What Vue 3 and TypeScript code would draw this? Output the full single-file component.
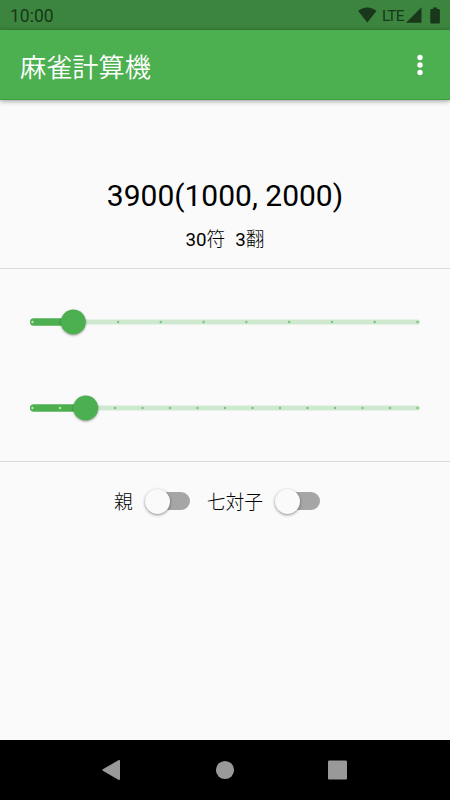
<script setup lang="ts">
import { ref } from 'vue'

interface SliderModel {
  label: string
  value: number
  divisions: number
}

interface SwitchModel {
  label: string
  on: boolean
}

const title = '麻雀計算機'
const score = '3900(1000, 2000)'

const sliders = ref<SliderModel[]>([
  { label: '符', value: 1, divisions: 9 },
  { label: '翻', value: 2, divisions: 14 },
])

const switches = ref<SwitchModel[]>([
  { label: '親', on: false },
  { label: '七対子', on: false },
])

const thumbX = (s: SliderModel): number => 30 + (390 * s.value) / s.divisions
const tickX = (s: SliderModel, i: number): number => 32.5 + (385 * i) / s.divisions
const ticks = (s: SliderModel): number[] =>
  Array.from({ length: s.divisions + 1 }, (_, i) => i).filter((i) => i !== s.value)
</script>

<template>
  <div class="screen">
    <div class="status">
      <span class="clock">10:00</span>
      <svg class="wifi" width="20" height="16" viewBox="0 0 20 16">
        <path d="M9.300 15.500 .2 4.100C2.700 1.900 5.800.6 9.300 .6s6.600 1.300 9.100 3.500z" />
      </svg>
      <span class="lte">LTE</span>
      <svg class="signal" width="16" height="16" viewBox="0 0 16 16">
        <path d="M0 15.700 15.500.2V15.700z" />
      </svg>
      <svg class="battery" width="10" height="17" viewBox="0 0 10 17">
        <path d="M3 .5h4v1.500h1.700Q9.900 2 9.900 3.200v12Q9.900 16.400 8.700 16.400H1.500Q.3 16.400 .3 15.200V3.200Q.3 2 1.500 2H3z" />
      </svg>
    </div>

    <header class="appbar">
      <h1>{{ title }}</h1>
      <svg width="10" height="24" viewBox="0 0 10 24">
        <circle cx="5" cy="4.500" r="2.700" />
        <circle cx="5" cy="12" r="2.700" />
        <circle cx="5" cy="19.500" r="2.700" />
      </svg>
    </header>

    <main>
      <section class="result">
        <div class="score">{{ score }}</div>
        <div class="detail">
          <span>30<span class="kanji">符</span></span>
          <span>3<span class="kanji">翻</span></span>
        </div>
      </section>

      <section class="sliders">
        <svg v-for="s in sliders" :key="s.label" class="slider" width="450" height="40" viewBox="0 0 450 40">
          <rect class="rail" x="30" y="17.500" width="390" height="5" rx="2.500" />
          <rect class="fill" x="30" y="16.250" :width="thumbX(s) - 30" height="7.500" rx="3.750" />
          <circle
            v-for="i in ticks(s)"
            :key="i"
            :class="i < s.value ? 'tick-on' : 'tick-off'"
            :cx="tickX(s, i)"
            cy="20"
            r="1.250"
          />
          <circle class="thumb" :cx="thumbX(s)" cy="20" r="12.500" />
        </svg>
      </section>

      <section class="switches">
        <div v-for="w in switches" :key="w.label" class="field">
          <span class="kanji">{{ w.label }}</span>
          <button class="switch" :class="{ on: w.on }" :aria-pressed="w.on" @click="w.on = !w.on">
            <i class="knob"></i>
          </button>
        </div>
      </section>
    </main>

    <nav class="navbar">
      <svg width="20" height="22" viewBox="0 0 20 22">
        <path d="M16.800 1.100 .8 10.200Q-.2 11 .8 11.800L16.800 20.900Q18 21.300 18 20V2Q18 .7 16.800 1.100z" />
      </svg>
      <svg width="20" height="20" viewBox="0 0 20 20"><circle cx="10" cy="10" r="9.100" /></svg>
      <svg width="20" height="20" viewBox="0 0 20 20"><rect x="0" y=".5" width="19" height="19" rx="1.300" /></svg>
    </nav>
  </div>
</template>

<style>
body {
  margin: 0;
}
</style>

<style scoped>
.screen {
  width: 450px;
  height: 800px;
  display: flex;
  flex-direction: column;
  overflow: hidden;
  background: #fafafa;
  color: #000;
  font-family: Roboto, "Noto Sans CJK JP", sans-serif;
}
.status {
  height: 30px;
  box-sizing: border-box;
  padding: 0 10px;
  display: flex;
  align-items: center;
  background: #3b853e;
  color: #19371a;
  fill: #19371a;
}
.clock {
  flex: 1;
  font-size: 17.5px;
  line-height: 30px;
  padding-top: 1px;
}
.lte {
  width: 23px;
  margin-left: 4px;
  padding-top: 1px;
  font-size: 15.5px;
  line-height: 30px;
  letter-spacing: -0.9px;
  white-space: nowrap;
}
.signal {
  margin-left: 1px;
}
.battery {
  margin: 1px 0 0 8px;
}
.appbar {
  height: 70px;
  flex: none;
  box-sizing: border-box;
  padding: 0 25px 0 20px;
  display: flex;
  align-items: center;
  justify-content: space-between;
  background: #4caf50;
  border-bottom: 1px solid #36a33b;
  box-shadow: 0 1px 5px rgba(0, 0, 0, 0.4);
  color: #fff;
  fill: #fff;
}
h1 {
  margin: 7px 0 0;
  font-size: 26.2px;
  line-height: 40px;
  font-weight: 350;
}
.kanji {
  font-weight: 300;
}
main {
  flex: 1;
}
.result {
  height: 169px;
  box-sizing: border-box;
  padding-top: 76px;
  border-bottom: 1px solid #dadada;
  text-align: center;
}
.score {
  font-size: 30px;
  line-height: 40px;
}
.detail {
  margin-top: 10px;
  display: flex;
  justify-content: center;
  gap: 10px;
  font-size: 18.75px;
  line-height: 28px;
}
.sliders {
  height: 193px;
  box-sizing: border-box;
  padding-top: 33px;
  display: flex;
  flex-direction: column;
  gap: 46.3px;
  border-bottom: 1px solid #dadada;
}
.slider {
  display: block;
  flex: none;
}
.rail {
  fill: #cfe8d0;
}
.fill,
.thumb {
  fill: #4caf50;
}
.thumb {
  filter: drop-shadow(0 1px 1px rgba(0, 0, 0, 0.35));
}
.tick-on {
  fill: #b8dfb9;
}
.tick-off {
  fill: #7cc57f;
}
.switches {
  padding-top: 19px;
  display: flex;
  justify-content: center;
  gap: 17px;
  margin-right: 16px;
}
.field {
  display: flex;
  align-items: center;
  gap: 12px;
  font-size: 18.75px;
  line-height: 40px;
}
.field > span {
  margin: 2px 0 -2px;
}
.switch {
  width: 45px;
  height: 18px;
  padding: 0;
  border: 0;
  display: flex;
  align-items: center;
  border-radius: 9px;
  background: linear-gradient(90deg, transparent 10px, #a6a6a6 10px);
}
.switch.on {
  justify-content: flex-end;
  background: #a5d7a7;
}
.knob {
  width: 25px;
  height: 25px;
  flex: none;
  border-radius: 50%;
  background: #fafafa;
  box-shadow: 0 1px 3px rgba(0, 0, 0, 0.45);
}
.navbar {
  height: 60px;
  display: flex;
  align-items: center;
  justify-content: center;
  gap: 93px;
  background: #000;
  fill: #999;
}
</style>
